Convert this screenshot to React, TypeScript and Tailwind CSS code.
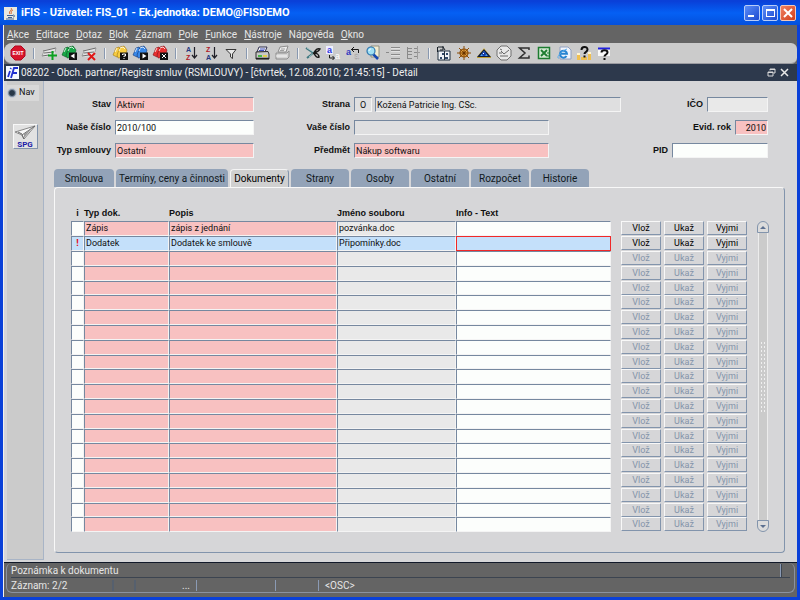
import { useState } from 'react'
import type { ReactNode } from 'react'

// [label, index of the underlined letter]
const MENU: [string, number][] = [
  ['Akce', 0],
  ['Editace', 0],
  ['Dotaz', 0],
  ['Blok', 0],
  ['Záznam', 0],
  ['Pole', 0],
  ['Funkce', 0],
  ['Nástroje', 0],
  ['Nápověda', 3],
  ['Okno', 0],
]

const TABS = [
  { label: 'Smlouva', width: 'w-[60px]' },
  { label: 'Termíny, ceny a činnosti', width: 'w-28' },
  { label: 'Dokumenty', width: 'w-[59px]' },
  { label: 'Strany', width: 'w-[58px]' },
  { label: 'Osoby', width: 'w-[58px]' },
  { label: 'Ostatní', width: 'w-[58px]' },
  { label: 'Rozpočet', width: 'w-[58px]' },
  { label: 'Historie', width: 'w-[58px]' },
]

interface DocRow {
  flag: string
  type: string
  desc: string
  file: string
}

const DOCS: DocRow[] = [
  { flag: '', type: 'Zápis', desc: 'zápis z jednání', file: 'pozvánka.doc' },
  { flag: '!', type: 'Dodatek', desc: 'Dodatek ke smlouvě', file: 'Připomínky.doc' },
]

const ROW_COUNT = 21
const ROWS = Array.from({ length: ROW_COUNT }, (_, i) => DOCS[i])

const TONES = {
  pink: 'bg-[#f8c1c1]',
  white: 'bg-[#fcfefc]',
  gray: 'bg-[#dfdfe0]',
  light: 'bg-[#e9e9e9]',
}

type Tone = keyof typeof TONES

const SUNKEN = 'border border-t-[#76889f] border-l-[#76889f] border-r-[#f4f4f4] border-b-[#f4f4f4]'
const RAISED = 'border border-t-[#f8f8f8] border-l-[#f8f8f8] border-r-[#8294ac] border-b-[#8294ac]'
const LABEL = "font-['Liberation_Sans',sans-serif] font-bold whitespace-nowrap"

/* ── toolbar icons ── */

function Svg({ children }: { children: ReactNode }) {
  return (
    <svg viewBox="0 0 16 16" className="h-4 w-4" aria-hidden>
      {children}
    </svg>
  )
}

function ExitIcon() {
  return (
    <Svg>
      <path d="M5 1h6l4 4v6l-4 4H5l-4-4V5z" fill="#d8142c" stroke="#b00820" />
      <text x="8" y="10" fontSize="5" fontWeight="bold" fill="#fff" textAnchor="middle" fontFamily="Liberation Sans, sans-serif">EXIT</text>
    </Svg>
  )
}

function Sheet() {
  return (
    <>
      <path d="M3 5 15 3l-2 8-12 1z" fill="#e4e4e4" />
      <path d="M2 6 15 3M1 11l7-1M3 8l10-1" stroke="#6e6e6e" fill="none" />
      <path d="m15 3-1 4M3 6l-2 5" stroke="#a0a0a0" fill="none" />
    </>
  )
}

function InsertIcon() {
  return (
    <Svg>
      <Sheet />
      <path d="M11.500 6v9M7 10.500h9" stroke="#0ca020" strokeWidth="2" />
    </Svg>
  )
}

function RemoveIcon() {
  return (
    <Svg>
      <Sheet />
      <path d="m7 8 7 7M14 8l-7 7" stroke="#e01818" strokeWidth="2" />
    </Svg>
  )
}

function CardIcon({ fill, dark, mark }: { fill: string; dark: string; mark: 'left' | 'right' | 'cross' | 'ask' }) {
  return (
    <Svg>
      <path d="M1 10 4 3l3-1 1 2-3 8z" fill={fill} stroke={dark} strokeWidth=".600" />
      <path d="m5 10 3-8 4-1 3 4-2 7-7 1z" fill={fill} stroke={dark} strokeWidth=".600" />
      <path d="m8 3 3-1 2 2M3 7l2-4M7 6l1-2" stroke="#fff" fill="none" opacity=".8" />
      <path d="M8 7.500h8V15H8z" fill="#101010" />
      {mark === 'left' && <path d="M13.500 8.500v5L9.500 11z" fill="#fff" />}
      {mark === 'right' && <path d="M10.500 8.500v5l4-2.500z" fill="#fff" />}
      {mark === 'cross' && <path d="m10 9 4 4m0-4-4 4" stroke="#fff" />}
      {mark === 'ask' && <path d="M10.500 10V9h3v2H12v1m0 1v1" stroke="#fff" fill="none" />}
    </Svg>
  )
}

function SortIcon({ top, bottom, topFill, bottomFill }: { top: string; bottom: string; topFill: string; bottomFill: string }) {
  return (
    <Svg>
      <text x="3" y="7" fontSize="7" fontWeight="bold" fill={topFill} fontFamily="Liberation Sans, sans-serif">{top}</text>
      <text x="3" y="15" fontSize="7" fontWeight="bold" fill={bottomFill} fontFamily="Liberation Sans, sans-serif">{bottom}</text>
      <path d="M11.500 2v11M9 10l2.500 3 2.500-3" stroke="#202028" fill="none" strokeWidth="1.200" />
    </Svg>
  )
}

function FilterIcon() {
  return (
    <Svg>
      <path d="M3 4.500h10L9.500 9v4.500l-2-1.500V9z" fill="#e8e8e8" stroke="#383838" />
    </Svg>
  )
}

function PrinterIcon() {
  return (
    <Svg>
      <path d="M5 2h8l-2 5H3z" fill="#f4f4f4" stroke="#303050" />
      <path d="M6 4h5M5 5.500h5" stroke="#4050c0" />
      <path d="m2 7 12-.500 1 2.500v5H2z" fill="#c8c8c8" stroke="#303030" />
      <path d="M2 13.500h13" stroke="#202020" strokeWidth="1.500" />
      <path d="M4 11h4" stroke="#20b020" strokeWidth="1.500" />
      <path d="M9 11h4" stroke="#e8d020" strokeWidth="1.500" />
    </Svg>
  )
}

function PrinterOffIcon() {
  return (
    <Svg>
      <path d="m6 2 8-1-2 6H4z" fill="#ececec" stroke="#8e8e8e" />
      <path d="M7 4h4M6 5.500h4" stroke="#a0a0a0" />
      <path d="M2 8h11l2-2v6l-2 2H2z" fill="#d4d4d4" stroke="#8e8e8e" />
      <path d="M2 11h11" stroke="#f4f4f4" />
    </Svg>
  )
}

function ScissorsIcon() {
  return (
    <Svg>
      <path d="m1 3 9 6M2 13l9-7" stroke="#407880" strokeWidth="2" />
      <path d="m2 3 8 5M4 12l6-5" stroke="#e0f4f4" strokeWidth=".600" />
      <path d="M9 8c2-4 4-5 6-4-1 2-3 3-6 4zm0 0c3 0 5 2 5 4-2 1-4-1-5-4z" fill="none" stroke="#181818" strokeWidth="1.500" />
    </Svg>
  )
}

function CopyIcon() {
  return (
    <Svg>
      <path d="M1 1h7v8H1z" fill="#eef" />
      <text x="2" y="8" fontSize="9" fontWeight="bold" fill="#3038e0" fontFamily="Liberation Sans, sans-serif">a</text>
      <path d="M4.500 10v3H9M7.500 11 9.500 13l-2 2" stroke="#181818" fill="none" />
      <text x="10" y="14" fontSize="9" fill="#fff" fontFamily="Liberation Sans, sans-serif">a</text>
    </Svg>
  )
}

function PasteIcon() {
  return (
    <Svg>
      <text x="1" y="10" fontSize="9" fontWeight="bold" fill="#3038c0" fontFamily="Liberation Sans, sans-serif">a</text>
      <path d="M6 4.500h7.500V8M9 2 6.500 4.500 9 7" stroke="#181818" fill="none" />
      <text x="9" y="14" fontSize="9" fill="#f4f4f4" stroke="#888" strokeWidth=".300" fontFamily="Liberation Sans, sans-serif">a</text>
    </Svg>
  )
}

function SearchIcon() {
  return (
    <Svg>
      <path d="M6 1h8v11H6z" fill="#f2ecd0" stroke="#909080" />
      <path d="m8 9 5 5" stroke="#1848b0" strokeWidth="2.500" />
      <circle cx="6" cy="6" r="4" fill="#a0e0f4" stroke="#3078b0" strokeWidth="1.200" />
      <path d="M4 6c0-1 1-2 2-2" stroke="#fff" fill="none" />
    </Svg>
  )
}

function ListIcon() {
  return (
    <Svg>
      <path d="M1 7.500h3M6 2.500h9M6 5.500h9M6 9.500h9M6 13.500h9" stroke="#8a8a8a" />
      <path d="M6 3.500h9M6 6.500h9M6 10.500h9" stroke="#f0f0f0" strokeWidth=".600" />
    </Svg>
  )
}

function TreeIcon() {
  return (
    <Svg>
      <path d="M2.500 2v12M2 3.500h5M2 6.500h5M2 9.500h5M2 13.500h5M9 3.500h3M9 7.500h3M9 11.500h3" stroke="#8a8a8a" />
      <path d="M12.500 1v13M12 7.500h3" stroke="#9c9c9c" />
    </Svg>
  )
}

function CalendarIcon() {
  return (
    <Svg>
      <path d="M2 6h12v9H2z" fill="#f0f4f8" stroke="#203040" />
      <path d="M1.500 2v5M2 2h5l2 3M7 1v4H4" stroke="#182028" fill="none" />
      <path d="M6 8h2v2H6zM10 8h2v2h-2zM4 12h2v2H4zM9 12h3v2H9z" fill="#304868" />
      <path d="M8.500 6v9" stroke="#203040" />
    </Svg>
  )
}

function HelmIcon() {
  return (
    <Svg>
      <circle cx="8" cy="8" r="4" fill="#e0a040" stroke="#8a4c08" strokeWidth="1.200" />
      <path d="M8 1v14M1 8h14M3 3l10 10M13 3 3 13" stroke="#8a4c08" />
      <circle cx="8" cy="8" r="1.500" fill="#683400" />
    </Svg>
  )
}

function EyeIcon() {
  return (
    <Svg>
      <path d="M8 3 1 12h14z" fill="#e4c040" />
      <path d="M1 12 8 4l7 8z" fill="#101c40" />
      <path d="M4 11 8 6l4 5z" fill="#48a0f0" />
      <circle cx="8" cy="9" r="2" fill="#1038a8" />
      <path d="M7 8h1v1H7z" fill="#fff" />
      <path d="M1 12.500h14" stroke="#c0a030" />
    </Svg>
  )
}

function ClockIcon() {
  return (
    <Svg>
      <path d="M5 1h6l4 4v6l-4 4H5l-4-4V5z" fill="#e8e8e8" stroke="#707070" />
      <path d="m5 6 3 3 5-4M3 8h3M4 11h8M4 4l2 1" stroke="#686868" fill="none" />
    </Svg>
  )
}

function SumIcon() {
  return (
    <Svg>
      <path d="M13 5V3H3.500L9 8l-5.500 5H13v-2.500" stroke="#303030" strokeWidth="1.500" fill="none" />
    </Svg>
  )
}

function SheetExportIcon() {
  return (
    <Svg>
      <path d="M2.500 2.500h11v11h-11z" fill="#d4ead4" stroke="#1c7c30" strokeWidth="1.500" />
      <path d="m5 5 6 6M11 5l-6 6" stroke="#1c7c30" strokeWidth="1.800" />
      <path d="M11 8h3M11 11h3" stroke="#1c7c30" />
    </Svg>
  )
}

function BrowserIcon() {
  return (
    <Svg>
      <path d="M4 2h8l3 3v9H4z" fill="#f0f4fc" stroke="#90a0c0" />
      <path d="M10.500 11A3.500 3.500 0 1 1 11 8.800H4" fill="none" stroke="#2884d0" strokeWidth="2" />
      <path d="M3 13C0 14 3 7 11 4" fill="none" stroke="#58acec" />
    </Svg>
  )
}

function HelpKeysIcon() {
  return (
    <Svg>
      <path d="M1 10h3v5H1zM5 12h6v3H5zM12 9h3v6h-3z" fill="#f0c050" />
      <path d="M1 8h3v2H1zM12 7h3v2h-3z" fill="#fff4d0" />
      <path d="M5.500 5c0-4 6-4 6-.500C11.500 7 8.500 7 8.500 9M8.500 10.500v2" fill="none" stroke="#101010" strokeWidth="2" />
    </Svg>
  )
}

function HelpWindowIcon() {
  return (
    <Svg>
      <path d="M2 3h12v8H2z" fill="#f8f8f8" />
      <path d="M2 3.500h12" stroke="#2020e0" strokeWidth="2" />
      <path d="M5.500 7.500c0-3 6-3 6 0 0 2-3 2-3 4M8.500 13v2" fill="none" stroke="#101010" strokeWidth="2" />
    </Svg>
  )
}

const TOOL_GROUPS: { name: string; icon: ReactNode }[][] = [
  [{ name: 'Konec', icon: <ExitIcon /> }],
  [
    { name: 'Nový záznam', icon: <InsertIcon /> },
    { name: 'Uložit', icon: <CardIcon fill="#18a848" dark="#085820" mark="left" /> },
    { name: 'Smazat záznam', icon: <RemoveIcon /> },
  ],
  [
    { name: 'Zadat dotaz', icon: <CardIcon fill="#f8cc40" dark="#a07818" mark="ask" /> },
    { name: 'Provést dotaz', icon: <CardIcon fill="#3888e8" dark="#103878" mark="right" /> },
    { name: 'Zrušit dotaz', icon: <CardIcon fill="#e83030" dark="#801018" mark="cross" /> },
  ],
  [
    { name: 'Třídit vzestupně', icon: <SortIcon top="A" bottom="Z" topFill="#283880" bottomFill="#b01828" /> },
    { name: 'Třídit sestupně', icon: <SortIcon top="Z" bottom="A" topFill="#b01828" bottomFill="#283880" /> },
    { name: 'Filtr', icon: <FilterIcon /> },
  ],
  [
    { name: 'Tisk', icon: <PrinterIcon /> },
    { name: 'Tisk sestavy', icon: <PrinterOffIcon /> },
  ],
  [
    { name: 'Vyjmout', icon: <ScissorsIcon /> },
    { name: 'Kopírovat', icon: <CopyIcon /> },
    { name: 'Vložit', icon: <PasteIcon /> },
    { name: 'Hledat', icon: <SearchIcon /> },
    { name: 'Seznam', icon: <ListIcon /> },
    { name: 'Strom', icon: <TreeIcon /> },
  ],
  [
    { name: 'Kalendář', icon: <CalendarIcon /> },
    { name: 'Navigace', icon: <HelmIcon /> },
    { name: 'Náhled', icon: <EyeIcon /> },
    { name: 'Čas', icon: <ClockIcon /> },
    { name: 'Součet', icon: <SumIcon /> },
    { name: 'Export', icon: <SheetExportIcon /> },
    { name: 'Prohlížeč', icon: <BrowserIcon /> },
    { name: 'Klávesy', icon: <HelpKeysIcon /> },
    { name: 'Nápověda k oknu', icon: <HelpWindowIcon /> },
  ],
]

/* ── frame ── */

function TitleBar() {
  return (
    <header className="flex h-6 items-center bg-linear-to-b from-[#0a3fd8] via-[#0560f4] to-[#0450dc] pr-1 pl-1">
      <svg viewBox="0 0 13 13" className="mr-1 h-[13px] w-[13px]" aria-hidden>
        <path d="M0 0h13v13H0z" fill="#e8e8e0" />
        <path d="M7 1c2 2-3 3-1 6M9 3C6 4 8 5 7 7" stroke="#d86020" fill="none" />
        <path d="M3 8.500h6M4 10.500h4M2 12h8M9 8c2 0 2 2 0 2" stroke="#406090" fill="none" />
      </svg>
      <h1 className="flex-1 text-[11px] font-bold whitespace-nowrap text-white">
        iFIS - Uživatel: FIS_01 - Ek.jednotka: DEMO@FISDEMO
      </h1>
      <div className="flex gap-[2px]">
        <button aria-label="Minimalizovat" className="flex h-4 w-4 items-end rounded-xs border border-[#b8ccf8] bg-linear-to-br from-[#5c8cf8] to-[#1c48d0] pb-[3px] pl-[3px]">
          <span className="h-[2px] w-[6px] bg-white" />
        </button>
        <button aria-label="Maximalizovat" className="flex h-4 w-4 items-center justify-center rounded-xs border border-[#b8ccf8] bg-linear-to-br from-[#5c8cf8] to-[#1c48d0]">
          <span className="h-2 w-[9px] border border-t-2 border-white" />
        </button>
        <button aria-label="Zavřít" className="flex h-4 w-4 items-center justify-center rounded-xs border border-[#f4c8b8] bg-linear-to-br from-[#f08060] to-[#d03c14]">
          <svg viewBox="0 0 10 10" className="h-[10px] w-[10px]" aria-hidden>
            <path d="m1 1 8 8M9 1 1 9" stroke="#fff" strokeWidth="2" />
          </svg>
        </button>
      </div>
    </header>
  )
}

function MenuBar() {
  return (
    <nav className="flex h-[18px] items-center gap-[7px] bg-[#646464] pl-[3px] text-[10px] text-[#e6e6e6]">
      {MENU.map(([label, key]) => (
        <button key={label}>
          {label.slice(0, key)}
          <span className="underline">{label[key]}</span>
          {label.slice(key + 1)}
        </button>
      ))}
    </nav>
  )
}

function Toolbar() {
  return (
    <div className="bg-[#646464]">
      <div className="flex h-[21px] items-center rounded-l-lg rounded-r-md border-b border-[#9a9aa0] bg-[#cbcbcb] pl-1">
        {TOOL_GROUPS.map((group, i) => (
          <div key={i} className="flex items-center">
            {i > 0 && (
              <span className="flex w-[11px] justify-center">
                <span className="h-[11px] w-[2px] border-r border-[#f0f0f0] bg-[#8898b0]" />
              </span>
            )}
            {group.map((tool) => (
              <button key={tool.name} aria-label={tool.name} className="flex h-5 w-5 items-center justify-center">
                {tool.icon}
              </button>
            ))}
          </div>
        ))}
      </div>
    </div>
  )
}

function FormTitle() {
  return (
    <div className="flex h-[17px] items-center bg-[#2d394c] pr-2 pl-[2px] text-[10px] text-[#eeeeee]">
      <svg viewBox="0 0 13 13" className="mr-[2px] h-[13px] w-[13px]" aria-hidden>
        <path d="M0 0h13v13H0z" fill="#f4f8ff" />
        <path d="m4 5-2 6M5 2l-.500 1" stroke="#2030d0" strokeWidth="1.800" />
        <path d="M12 2H8L5 12M6 7h5" stroke="#2030d0" strokeWidth="1.800" fill="none" />
      </svg>
      <h2 className="flex-1 whitespace-nowrap font-normal">
        08202 - Obch. partner/Registr smluv (RSMLOUVY) - [čtvrtek, 12.08.2010; 21:45:15] - Detail
      </h2>
      <button aria-label="Obnovit" className="mr-1">
        <svg viewBox="0 0 9 9" className="h-[9px] w-[9px]" aria-hidden>
          <path d="M3 2.500V1h5v4H6.500M3 1.500h5" stroke="#d8d8d8" fill="none" />
          <path d="M1 4h5v4H1zM1 4.500h5" stroke="#d8d8d8" fill="none" />
        </svg>
      </button>
      <button aria-label="Zavřít formulář">
        <svg viewBox="0 0 9 9" className="h-[9px] w-[9px]" aria-hidden>
          <path d="m1 1 7 7M8 1 1 8" stroke="#e8e8e8" strokeWidth="1.500" />
        </svg>
      </button>
    </div>
  )
}

function SidePanel() {
  return (
    <aside className="mb-[2px] ml-[3px] flex w-[37px] flex-col items-center border-r border-b border-[#a8b4c6] bg-[#cbcbcb]">
      <label className="mt-1 flex h-4 w-8 items-center gap-[3px] self-start bg-[#d8d8d8] pl-px text-[9px]">
        <input type="radio" name="nav" defaultChecked className="h-2 w-2 appearance-none rounded-full border border-[#8090a4] bg-[#e0e4ea] checked:bg-[#283848] checked:ring-1 checked:ring-[#c0c8d4]" />
        Nav
      </label>
      <button className={`mt-[23px] flex h-[25px] w-[25px] flex-col items-center bg-[#e2e2e2] ${RAISED}`}>
        <svg viewBox="0 0 22 16" className="h-4 w-[22px]" aria-hidden>
          <path d="M1 7 21 1 10 14l-2-4z" fill="#f8f8f8" stroke="#888" />
          <path d="M21 1 8 10l2 4M8 9 4 7" stroke="#666" fill="none" />
          <path d="m10 9 9-7-9 11z" fill="#9a9a9a" />
        </svg>
        <span className="text-[8px] leading-[7px] font-bold text-[#1c1ca8]">SPG</span>
      </button>
    </aside>
  )
}

/* ── form ── */

function Field({ id, label, value = '', tone, width, align = '' }: {
  id: string
  label: string
  value?: string
  tone: Tone
  width: string
  align?: string
}) {
  return (
    <div className="flex items-center gap-1">
      <label htmlFor={id} className={`flex-1 text-right ${LABEL}`}>{label}</label>
      <input id={id} defaultValue={value} className={`h-[15px] px-px ${SUNKEN} ${TONES[tone]} ${width} ${align}`} />
    </div>
  )
}

function HeaderForm() {
  return (
    <div className="flex gap-8 pr-[29px] pl-3">
      <div className="flex w-[198px] flex-col gap-2">
        <Field id="stav" label="Stav" value="Aktivní" tone="pink" width="w-[139px]" />
        <Field id="nase" label="Naše číslo" value="2010/100" tone="white" width="w-[139px]" />
        <Field id="typ" label="Typ smlouvy" value="Ostatní" tone="pink" width="w-[139px]" />
      </div>
      <div className="grid flex-1 grid-cols-[64px_1fr] items-center gap-x-1 gap-y-2">
        <label htmlFor="strana" className={`text-right ${LABEL}`}>Strana</label>
        <div className="flex gap-[3px]">
          <input id="strana" defaultValue="O" className={`h-[15px] w-[18px] text-center ${SUNKEN} ${TONES.gray}`} />
          <input aria-label="Název strany" defaultValue="Kožená Patricie Ing. CSc." className={`h-[15px] max-w-[246px] flex-1 px-px ${SUNKEN} ${TONES.gray}`} />
        </div>
        <label htmlFor="vase" className={`text-right ${LABEL}`}>Vaše číslo</label>
        <input id="vase" className={`h-[15px] w-[195px] px-px ${SUNKEN} ${TONES.gray}`} />
        <label htmlFor="predmet" className={`text-right ${LABEL}`}>Předmět</label>
        <input id="predmet" defaultValue="Nákup softwaru" className={`h-[15px] w-[195px] px-px ${SUNKEN} ${TONES.pink}`} />
      </div>
      <div className="flex flex-col gap-2">
        <Field id="ico" label="IČO" tone="light" width="w-[61px]" />
        <Field id="rok" label="Evid. rok" value="2010" tone="pink" width="w-[33px]" align="text-right" />
        <Field id="pid" label="PID" tone="white" width="w-24" />
      </div>
    </div>
  )
}

function Cell({ label, value = '', tone, selected, className = '' }: {
  label: string
  value?: string
  tone: Tone
  selected: boolean
  className?: string
}) {
  return (
    <td className={`p-0 ${SUNKEN} ${selected ? 'bg-[#c4e0fa]' : TONES[tone]}`}>
      <input aria-label={label} defaultValue={value} className={`block h-3 w-full bg-transparent px-px outline-none ${className}`} />
    </td>
  )
}

function DocTable() {
  const [current, setCurrent] = useState(1)

  return (
    <table className="w-full table-fixed border-separate border-spacing-0">
      <colgroup>
        <col className="w-[13px]" />
        <col className="w-[85px]" />
        <col className="w-[168px]" />
        <col className="w-[119px]" />
        <col />
        <col className="w-[53px]" />
        <col className="w-[43px]" />
        <col className="w-[40px]" />
      </colgroup>
      <thead>
        <tr className={`h-[14px] text-left align-top leading-3 ${LABEL}`}>
          <th className="p-0 text-center">i</th>
          <th className="p-0">Typ dok.</th>
          <th className="p-0">Popis</th>
          <th className="p-0">Jméno souboru</th>
          <th className="p-0">Info - Text</th>
          <th className="p-0" colSpan={3} aria-label="Akce" />
        </tr>
      </thead>
      <tbody>
        {ROWS.map((row, i) => {
          const selected = i === current
          return (
            <tr key={i} onFocus={() => setCurrent(i)} className="h-[15px] nth-[5n]:h-[14px]">
              <Cell label="i" value={row?.flag} tone="white" selected={selected} className="text-center font-bold text-red-600" />
              <Cell label="Typ dok." value={row?.type} tone="pink" selected={selected} />
              <Cell label="Popis" value={row?.desc} tone="pink" selected={selected} />
              <Cell label="Jméno souboru" value={row?.file} tone="light" selected={selected} />
              <td className={`border p-0 ${selected ? 'border-[#f02828] bg-[#c4e0fa]' : 'border-t-[#76889f] border-r-[#f4f4f4] border-b-[#f4f4f4] border-l-[#76889f] bg-[#fcfefc]'}`}>
                <input aria-label="Info - Text" className="block h-3 w-full bg-transparent px-px outline-none" />
              </td>
              {['Vlož', 'Ukaž', 'Vyjmi'].map((action, j) => (
                <td key={action} className={j === 0 ? 'p-0 pl-[10px] align-top' : 'p-0 align-top'}>
                  <button disabled={!row} className={`block h-[14px] w-10 leading-3 text-black disabled:text-[#8494aa] ${RAISED}`}>
                    {action}
                  </button>
                </td>
              ))}
            </tr>
          )
        })}
      </tbody>
    </table>
  )
}

function Scroller() {
  return (
    <div className="mt-[14px] flex w-3 flex-col items-center">
      <button aria-label="Nahoru" className="flex h-3 w-3 items-center justify-center rounded-t-full border border-[#8294ac] bg-[#dcdcdc]">
        <span className="border-x-3 border-b-3 border-x-transparent border-b-[#5c7090]" />
      </button>
      <div className="flex w-[10px] flex-1 items-center justify-center border-x border-[#ececec] bg-[#cbcbcb]">
        <span className="h-[72px] w-[6px] bg-[radial-gradient(#f0f0f0_1px,transparent_1px)] bg-size-[3px_4px]" />
      </div>
      <button aria-label="Dolů" className="flex h-3 w-3 items-center justify-center rounded-b-full border border-[#8294ac] bg-[#dcdcdc]">
        <span className="border-x-3 border-t-3 border-x-transparent border-t-[#5c7090]" />
      </button>
    </div>
  )
}

function Tabs() {
  const [active, setActive] = useState('Dokumenty')

  return (
    <div role="tablist" className="flex gap-[2px] text-[10px]">
      {TABS.map(({ label, width }) => (
        <button
          key={label}
          role="tab"
          aria-selected={label === active}
          onClick={() => setActive(label)}
          className={[
            'h-[18px] rounded-t-sm whitespace-nowrap',
            width,
            label === active
              ? 'border border-b-0 border-t-[#f4f4f4] border-l-[#f4f4f4] border-r-[#8294ac] bg-[#d0d0d0] text-black'
              : 'bg-[#93a3b8] text-[#101820]',
          ].join(' ')}
        >
          {label}
        </button>
      ))}
    </div>
  )
}

function StatusBar() {
  return (
    <footer className="border-t border-[#101828] bg-[#646464] pb-1 text-[10px] text-[#e6e6e6]">
      <div className="mx-[2px] rounded-md border border-t-0 border-[#8a92a0]">
        <div className="mx-1 flex h-[15px] items-center border-b border-[#3c4450]">
          <span className="flex-1">Poznámka k dokumentu</span>
          <span className="mr-2 h-[13px] w-[2px] border-l border-[#8a9ab4] bg-[#3c4450]" />
        </div>
        <div className="mx-1 flex h-[14px] items-center">
          <span className="w-[101px]">Záznam: 2/2</span>
          <span className="h-[11px] w-[22px] border-l-2 border-[#56606e]" />
          <span className="h-[11px] w-[62px] border-l-2 border-[#56606e] pr-[6px] text-right leading-[11px]">...</span>
          <span className="h-[11px] w-[79px] border-l border-[#8a9ab4]" />
          <span className="h-[11px] w-[43px] border-l border-[#8a9ab4]" />
          <span className="h-[11px] border-l border-[#8a9ab4] pl-[6px] leading-[11px]">&lt;OSC&gt;</span>
        </div>
      </div>
    </footer>
  )
}

export default function App() {
  return (
    <div className="flex min-h-screen flex-col border-b-3 border-[#0a40d8] bg-[#0a40d8] pt-px font-['Roboto','Liberation_Sans',sans-serif] text-[9px] text-[#101010]">
      <TitleBar />
      <div className="mr-[3px] ml-[3px] flex flex-1 flex-col border-l border-[#f0f0f0] bg-[#d6d6d8]">
        <MenuBar />
        <Toolbar />
        <FormTitle />
        <div className="flex flex-1">
          <SidePanel />
          <main className="flex min-w-0 flex-1 flex-col pt-4 pb-[9px]">
            <HeaderForm />
            <div className="mt-[11px] flex flex-1 flex-col pr-3 pl-[10px]">
              <Tabs />
              <div className={`flex flex-1 items-start rounded-sm pt-[19px] pr-[15px] pl-4 ${RAISED}`}>
                <div className="flex min-w-0 flex-1 items-stretch gap-[10px]">
                  <DocTable />
                  <Scroller />
                </div>
              </div>
            </div>
          </main>
        </div>
        <StatusBar />
      </div>
    </div>
  )
}
